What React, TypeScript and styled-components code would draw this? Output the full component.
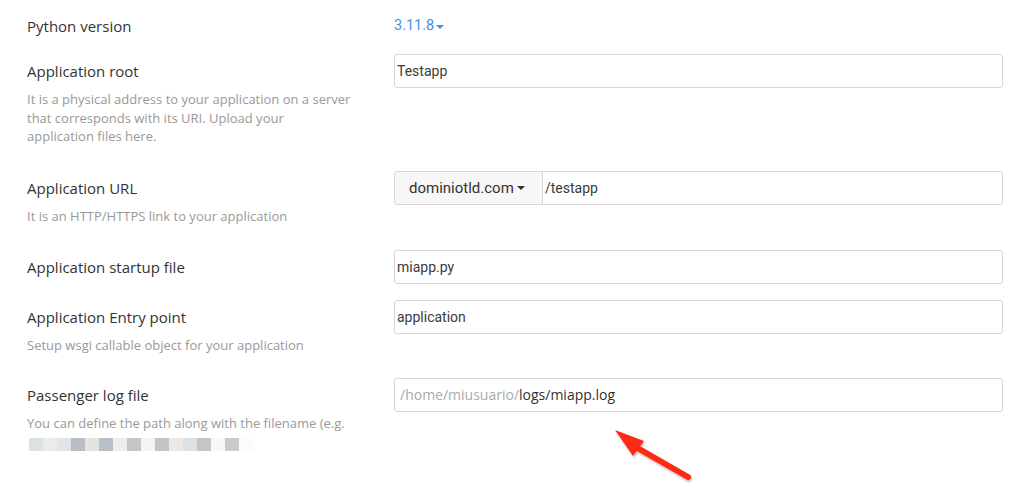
import React from "react";
import styled, { createGlobalStyle } from "styled-components";

const Global = createGlobalStyle`
  html, body { margin: 0; padding: 0; background: #fff; }
  body { font-family: "Open Sans", "Liberation Sans", sans-serif; color: #333; }
  * { box-sizing: border-box; }
`;

const Page = styled.div`
  position: relative;
  width: 1021px;
  height: 487px;
  padding: 9px 18px 0 27px;
  overflow: hidden;
`;

const Row = styled.div<{ $mb: number }>`
  display: grid;
  grid-template-columns: 367px 1fr;
  align-items: start;
  margin-bottom: ${(p) => p.$mb}px;
`;

const LabelCol = styled.div`
  display: flex;
  flex-direction: column;
  padding-right: 43px;
`;

const Label = styled.div`
  font-size: 15px;
  line-height: 20px;
  padding-top: 7px;
  color: #333;
`;

const Desc = styled.div`
  font-size: 13px;
  line-height: 18.5px;
  color: #999;
  margin-top: 9px;
`;

const Version = styled.div`
  font-family: Roboto, "Liberation Sans", sans-serif;
  font-size: 14.5px;
  line-height: 20px;
  padding-top: 7px;
  color: #3f92e4;
  display: flex;
  align-items: center;
  gap: 2px;
`;

const Caret = styled.span<{ $color: string }>`
  display: inline-block;
  width: 0;
  height: 0;
  border-left: 4px solid transparent;
  border-right: 4px solid transparent;
  border-top: 4px solid ${(p) => p.$color};
  margin-top: 1px;
`;

const Box = styled.div`
  height: 34px;
  border: 1px solid #d6d6d6;
  border-radius: 3px;
  display: flex;
  align-items: center;
  overflow: hidden;
  background: #fff;
`;

const InputText = styled.div`
  font-family: Roboto, "Liberation Sans", sans-serif;
  font-size: 14px;
  color: #3a3a3a;
  padding-left: 2px;
`;

const Addon = styled.div`
  height: 100%;
  width: 148px;
  flex: none;
  background: #f7f7f7;
  border-right: 1px solid #d6d6d6;
  display: flex;
  align-items: center;
  padding-left: 14px;
  gap: 3px;
  font-family: Roboto, "Liberation Sans", sans-serif;
  font-size: 15px;
  color: #333;
`;

const PathText = styled.div`
  font-size: 14px;
  padding-left: 5px;
  color: #333;
`;

const Muted = styled.span`
  color: #aaa;
`;

const Pixels = styled.div`
  display: flex;
  margin-top: 6px;
  margin-left: 2px;
  height: 13px;
`;

const Pixel = styled.span<{ $c: string }>`
  width: 14px;
  height: 13px;
  background: ${(p) => p.$c};
`;

const ArrowWrap = styled.svg`
  position: absolute;
  left: 606px;
  top: 422px;
`;

const pixelColors = [
  "#dce1e3", "#ecebe9", "#e1e5e7", "#b9bec4", "#e4e4df", "#b6c0c6", "#eeedeb", "#c8c5c3",
  "#f5f4f2", "#c5c3c3", "#ede8e3", "#dde1e3", "#c5c5c5", "#f6f7f9", "#cacacc", "#fbfbfc",
];

export default function App() {
  return (
    <>
      <Global />
      <Page>
        <Row $mb={18}>
          <LabelCol>
            <Label>Python version</Label>
          </LabelCol>
          <Version>
            3.11.8<Caret $color="#3f92e4" />
          </Version>
        </Row>

        <Row $mb={25}>
          <LabelCol>
            <Label>Application root</Label>
            <Desc>
              It is a physical address to your application on a server that corresponds with its URI. Upload your
              application files here.
            </Desc>
          </LabelCol>
          <Box>
            <InputText>Testapp</InputText>
          </Box>
        </Row>

        <Row $mb={25}>
          <LabelCol>
            <Label>Application URL</Label>
            <Desc>It is an HTTP/HTTPS link to your application</Desc>
          </LabelCol>
          <Box>
            <Addon>
              dominiotld.com<Caret $color="#333" />
            </Addon>
            <InputText>/testapp</InputText>
          </Box>
        </Row>

        <Row $mb={16}>
          <LabelCol>
            <Label>Application startup file</Label>
          </LabelCol>
          <Box>
            <InputText>miapp.py</InputText>
          </Box>
        </Row>

        <Row $mb={23}>
          <LabelCol>
            <Label>Application Entry point</Label>
            <Desc>Setup wsgi callable object for your application</Desc>
          </LabelCol>
          <Box>
            <InputText>application</InputText>
          </Box>
        </Row>

        <Row $mb={0}>
          <LabelCol>
            <Label>Passenger log file</Label>
            <Desc>You can define the path along with the filename (e.g.</Desc>
            <Pixels>
              {pixelColors.map((c, i) => (
                <Pixel key={i} $c={c} />
              ))}
            </Pixels>
          </LabelCol>
          <Box>
            <PathText>
              <Muted>/home/miusuario/</Muted>logs/miapp.log
            </PathText>
          </Box>
        </Row>

        <ArrowWrap width="90" height="62" viewBox="0 0 90 62">
          <defs>
            <filter id="sh" x="-20%" y="-20%" width="140%" height="140%">
              <feDropShadow dx="1" dy="2" stdDeviation="1.2" floodColor="#000" floodOpacity="0.25" />
            </filter>
          </defs>
          <g filter="url(#sh)">
            <line x1="28" y1="24" x2="82" y2="55" stroke="#ff2a12" strokeWidth="6" strokeLinecap="round" />
            <polygon points="9,8 38,19 27,34" fill="#ff2a12" />
          </g>
        </ArrowWrap>
      </Page>
    </>
  );
}
